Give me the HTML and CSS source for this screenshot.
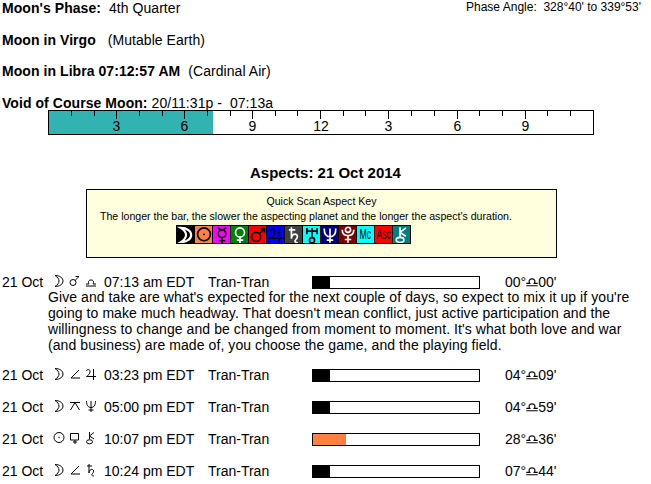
FILE: index.html
```html
<!DOCTYPE html>
<html lang="en">
<head>
<meta charset="utf-8">
<title>Moon Aspects</title>
<link rel="stylesheet" href="styles.css">
</head>
<body>
<svg class="defs" width="0" height="0" aria-hidden="true">
  <symbol id="moon" viewBox="0 0 14 14"><path d="M3 1.500C8 1.500 11 4 11 7S8 12.500 3 12.500C5.500 11 7 9 7 7S5.500 3 3 1.500Z"/></symbol>
  <symbol id="sun" viewBox="0 0 14 14"><circle cx="7" cy="6.500" r="5"/><circle class="solid" cx="7" cy="6.500" r=".7"/></symbol>
  <symbol id="mercury" viewBox="0 0 14 14"><path d="M4 1C4.500 2.500 5.500 3 7 3S9.500 2.500 10 1M7 9V13.500M4.500 11.500H9.500"/><circle cx="7" cy="6" r="3"/></symbol>
  <symbol id="venus" viewBox="0 0 14 14"><circle cx="7" cy="5" r="3.500"/><path d="M7 8.500V13.500M4.500 11H9.500"/></symbol>
  <symbol id="mars" viewBox="0 0 14 14"><circle cx="5.500" cy="8.500" r="3.500"/><path d="M8 6L12 2M9 2H12V5"/></symbol>
  <symbol id="jupiter" viewBox="0 0 14 14"><path d="M2.500 4C3 2 6 2 6 4.500C6 7 4 8.500 2.500 9.500H12M9.500 2V13"/></symbol>
  <symbol id="saturn" viewBox="0 0 14 14"><path d="M3 3H8M5 1V10C5 7 7 6 8.500 6.500S10 9 8.500 10.500S8 13 10 13"/></symbol>
  <symbol id="uranus" viewBox="0 0 14 14"><path d="M3 1.500V6.500M11 1.500V6.500M3 4H11M7 1.500V9"/><circle cx="7" cy="11" r="2"/></symbol>
  <symbol id="neptune" viewBox="0 0 14 14"><path d="M2.500 2C2.500 6 4 8.500 7 8.500S11.500 6 11.500 2M7 2V13M4.500 11H9.500"/></symbol>
  <symbol id="pluto" viewBox="0 0 14 14"><path d="M2.500 3C2.500 6 4.500 7.500 7 7.500S11.500 6 11.500 3M7 7.500V13M4.500 10.500H9.500"/><circle cx="7" cy="3" r="2"/></symbol>
  <symbol id="chiron" viewBox="0 0 14 14"><path d="M5.500 1V8.500M5.500 5L10 1.500M5.500 5L10 8"/><ellipse cx="5.500" cy="10.800" rx="3" ry="2"/></symbol>
  <symbol id="conjunct" viewBox="0 0 14 14"><circle cx="5" cy="8.500" r="3"/><path d="M7.200 6.300L11 2.500H7.500"/></symbol>
  <symbol id="libra" viewBox="0 0 14 14"><path d="M2 12H12M2 10H5C4 8.500 4.200 6 7 6S10 8.500 9 10H12"/></symbol>
  <symbol id="semisquare" viewBox="0 0 14 14"><path d="M11 3L3 11H12"/></symbol>
  <symbol id="quincunx" viewBox="0 0 14 14"><path d="M2 3.500H12M7 3.500L2.500 11M7 3.500L11.500 11"/></symbol>
  <symbol id="sesqui" viewBox="0 0 14 14"><path d="M2.500 2.500H10.500V9H2.500ZM7 9V13M5 11H9"/></symbol>
</svg>

<header class="top">
  <div class="facts">
    <p class="fact"><b>Moon's Phase:</b>&nbsp; 4th Quarter</p>
    <p class="fact fact-tight"><b>Moon in Virgo</b> &nbsp; (Mutable Earth)</p>
    <p class="fact"><b>Moon in Libra 07:12:57 AM</b>&nbsp; (Cardinal Air)</p>
    <p class="fact fact-last"><b>Void of Course Moon:</b> 20/11:31p -&nbsp; 07:13a</p>
  </div>
  <p class="angle">Phase Angle:&nbsp; 328°40' to 339°53'</p>
</header>

<svg class="ruler" width="546" height="25" viewBox="0 0 546 25">
  <rect class="ruler-void" x="0" y="0" width="165" height="25"/>
  <path class="ruler-ticks" d="M23.500 1v5M46.500 1v5M68.500 1v8M91.500 1v5M114.500 1v5M136.500 1v8M159.500 1v5M182.500 1v5M204.500 1v8M227.500 1v5M249.500 1v5M272.500 1v8M295.500 1v5M317.500 1v5M340.500 1v8M363.500 1v5M386.500 1v5M409.500 1v8M431.500 1v5M454.500 1v5M477.500 1v8M499.500 1v5M522.500 1v5"/>
  <text class="ruler-label" x="68.500" y="21">3</text>
  <text class="ruler-label" x="136.500" y="21">6</text>
  <text class="ruler-label" x="204.500" y="21">9</text>
  <text class="ruler-label" x="273" y="21">12</text>
  <text class="ruler-label" x="340.500" y="21">3</text>
  <text class="ruler-label" x="409.500" y="21">6</text>
  <text class="ruler-label" x="477.500" y="21">9</text>
  <rect class="ruler-frame" x=".5" y=".5" width="545" height="24"/>
</svg>

<h2 class="title">Aspects: 21 Oct 2014</h2>

<section class="key">
  <div class="key-title">Quick Scan Aspect Key</div>
  <div class="key-text">The longer the bar, the slower the aspecting planet and the longer the aspect's duration.</div>
  <div class="key-icons">
    <span class="cell c-moon"><svg class="cell-g"><use href="#moon"/></svg></span>
    <span class="cell c-sun"><svg class="cell-g"><use href="#sun"/></svg></span>
    <span class="cell c-mercury"><svg class="cell-g"><use href="#mercury"/></svg></span>
    <span class="cell c-venus"><svg class="cell-g"><use href="#venus"/></svg></span>
    <span class="cell c-mars"><svg class="cell-g"><use href="#mars"/></svg></span>
    <span class="cell c-jupiter"><svg class="cell-g"><use href="#jupiter"/></svg></span>
    <span class="cell c-saturn"><svg class="cell-g"><use href="#saturn"/></svg></span>
    <span class="cell c-uranus"><svg class="cell-g"><use href="#uranus"/></svg></span>
    <span class="cell c-neptune"><svg class="cell-g"><use href="#neptune"/></svg></span>
    <span class="cell c-pluto"><svg class="cell-g"><use href="#pluto"/></svg></span>
    <span class="cell c-mc"><span class="narrow">Mc</span></span>
    <span class="cell c-asc"><span class="narrow">Asc</span></span>
    <span class="cell c-chiron"><svg class="cell-g"><use href="#chiron"/></svg></span>
  </div>
</section>

<section class="aspects">
  <article class="aspect aspect-long">
    <div class="row">
      <span class="date">21 Oct</span>
      <span class="glyphs"><svg class="g"><use href="#moon"/></svg><svg class="g"><use href="#conjunct"/></svg><svg class="g"><use href="#libra"/></svg></span>
      <span class="time">07:13 am EDT</span>
      <span class="kind">Tran-Tran</span>
      <span class="bar"><span class="fill"></span></span>
      <span class="deg"><span>00°</span><svg class="g-inline"><use href="#libra"/></svg><span>00'</span></span>
    </div>
    <p class="desc">Give and take are what's expected for the next couple of days, so expect to mix it up if you're going to make much headway. That doesn't mean conflict, just active participation and the willingness to change and be changed from moment to moment. It's what both love and war (and business) are made of, you choose the game, and the playing field.</p>
  </article>
  <article class="aspect">
    <div class="row">
      <span class="date">21 Oct</span>
      <span class="glyphs"><svg class="g"><use href="#moon"/></svg><svg class="g"><use href="#semisquare"/></svg><svg class="g"><use href="#jupiter"/></svg></span>
      <span class="time">03:23 pm EDT</span>
      <span class="kind">Tran-Tran</span>
      <span class="bar"><span class="fill"></span></span>
      <span class="deg"><span>04°</span><svg class="g-inline"><use href="#libra"/></svg><span>09'</span></span>
    </div>
  </article>
  <article class="aspect">
    <div class="row">
      <span class="date">21 Oct</span>
      <span class="glyphs"><svg class="g"><use href="#moon"/></svg><svg class="g"><use href="#quincunx"/></svg><svg class="g"><use href="#neptune"/></svg></span>
      <span class="time">05:00 pm EDT</span>
      <span class="kind">Tran-Tran</span>
      <span class="bar"><span class="fill"></span></span>
      <span class="deg"><span>04°</span><svg class="g-inline"><use href="#libra"/></svg><span>59'</span></span>
    </div>
  </article>
  <article class="aspect">
    <div class="row">
      <span class="date">21 Oct</span>
      <span class="glyphs"><svg class="g"><use href="#sun"/></svg><svg class="g"><use href="#sesqui"/></svg><svg class="g"><use href="#chiron"/></svg></span>
      <span class="time">10:07 pm EDT</span>
      <span class="kind">Tran-Tran</span>
      <span class="bar"><span class="fill fill-orange"></span></span>
      <span class="deg"><span>28°</span><svg class="g-inline"><use href="#libra"/></svg><span>36'</span></span>
    </div>
  </article>
  <article class="aspect">
    <div class="row">
      <span class="date">21 Oct</span>
      <span class="glyphs"><svg class="g"><use href="#moon"/></svg><svg class="g"><use href="#semisquare"/></svg><svg class="g"><use href="#saturn"/></svg></span>
      <span class="time">10:24 pm EDT</span>
      <span class="kind">Tran-Tran</span>
      <span class="bar"><span class="fill"></span></span>
      <span class="deg"><span>07°</span><svg class="g-inline"><use href="#libra"/></svg><span>44'</span></span>
    </div>
  </article>
</section>
</body>
</html>
```
FILE: styles.css
```css
* { box-sizing: border-box; }
html, body { margin: 0; padding: 0; }
body {
  width: 651px;
  height: 484px;
  overflow: hidden;
  background: #fff;
  color: #000;
  font: 14px/16px "Liberation Sans", Arial, sans-serif;
}
.defs { display: block; width: 0; height: 0; }
p { margin: 0; }

.top { display: flex; justify-content: space-between; padding: 0 10px 0 2px; height: 110px; }
.facts { display: flex; flex-direction: column; }
.fact { margin-bottom: 16px; height: 16px; letter-spacing: .06px; white-space: nowrap; }
.fact-tight { margin-bottom: 15px; }
.fact-last { margin: 0; }
.angle { font-size: 12px; line-height: 14px; }

.ruler { display: block; margin-left: 48px; }
.ruler-void { fill: #33b2b2; }
.ruler-ticks { stroke: #000; stroke-width: 1; fill: none; }
.ruler-frame { fill: none; stroke: #000; stroke-width: 1; }
.ruler-label { font: 14px "Liberation Sans", Arial, sans-serif; text-anchor: middle; fill: #000; }

.title { margin: 30px 0 0; font-size: 15px; line-height: 16px; font-weight: bold; text-align: center; width: 651px; }

.key {
  margin: 8px 0 0 86px;
  width: 471px;
  height: 69px;
  border: 1px solid #000;
  background: #ffffdd;
  font-size: 10.6px;
  line-height: 15px;
  padding-top: 4px;
}
.key-title { text-align: center; }
.key-text { padding-left: 13px; }
.key-icons { display: flex; margin: 1px 0 0 90px; }
.cell {
  display: flex;
  align-items: center;
  justify-content: center;
  flex: none;
  width: 19px;
  height: 19px;
  border: 1px solid #000;
  margin-left: -1px;
  overflow: hidden;
}
.cell-g {
  width: 18px;
  height: 18px;
  flex: none;
  display: block;
  fill: none;
  stroke: currentColor;
  stroke-width: 1.3;
}
.solid { fill: currentColor; stroke: none; }
.narrow { display: block; font-size: 14px; line-height: 17px; transform: scaleX(.62); white-space: nowrap; }
.c-moon { background: #000; color: #fff; }
.c-moon .cell-g { stroke-width: 1.7; }
.c-sun { background: #ff8040; color: #000; }
.c-mercury { background: #ff00ff; color: #000; }
.c-venus { background: #008000; color: #fff; }
.c-mars { background: #ff0000; color: #000; }
.c-jupiter { background: #0000ff; color: #000; }
.c-saturn { background: #404040; color: #fff; }
.c-uranus { background: #00ffff; color: #000; }
.c-neptune { background: #000080; color: #fff; }
.c-pluto { background: #800000; color: #fff; }
.c-mc { background: #00ffff; color: #000; }
.c-asc { background: #ff0000; color: #000; }
.c-chiron { background: #008080; color: #fff; }

.aspects { margin-top: 16px; display: flex; flex-direction: column; gap: 16px; }
.row {
  display: grid;
  grid-template-columns: 50px 52px 104px 104px 168px 1fr;
  grid-template-rows: 16px;
  align-items: center;
  height: 16px;
  padding-left: 2px;
}
.glyphs { display: flex; gap: 2px; margin-top: -2px; }
.g {
  width: 14px;
  height: 14px;
  display: block;
  flex: none;
  fill: none;
  stroke: currentColor;
  stroke-width: 1;
}
.deg { display: flex; height: 16px; padding-left: 25px; }
.g-inline {
  width: 16px;
  height: 16px;
  display: block;
  flex: none;
  margin: -2px -2px 0;
  fill: none;
  stroke: currentColor;
  stroke-width: 1;
}
.bar {
  display: block;
  width: 168px;
  height: 13px;
  border: 1px solid #000;
  background: #fff;
}
.fill { display: block; width: 17px; height: 100%; background: #000; }
.fill-orange { width: 33px; background: #ff8040; }
.desc { margin: -1px 0 -2px 48px; width: 595px; letter-spacing: .075px; }
```
